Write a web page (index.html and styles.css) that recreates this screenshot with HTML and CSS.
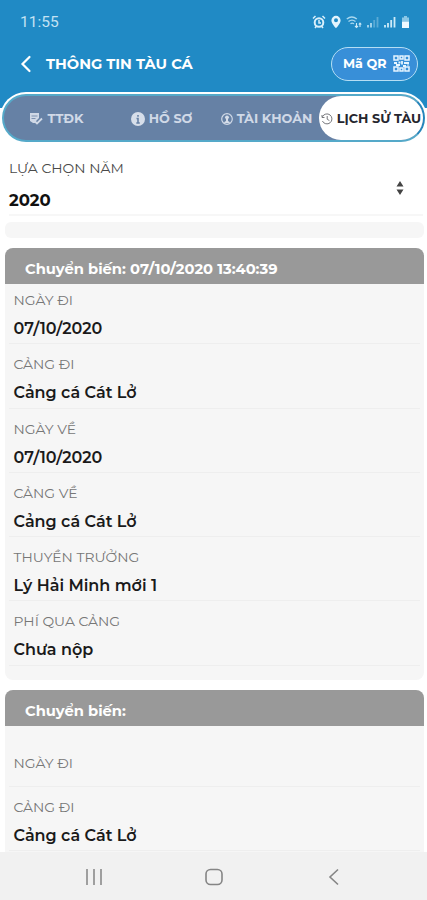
FILE: index.html
```html
<!DOCTYPE html>
<html lang="vi">
<head>
    <meta charset="UTF-8">
    <meta name="viewport" content="width=device-width, initial-scale=1.0">
    <title>Thông tin tàu cá</title>
    <link rel="stylesheet" href="styles.css">
</head>
<body>
    <div class="app">
        <div class="status-bar">
            <span class="time">11:55</span>
            <div class="status-icons">
                <svg width="14" height="14" viewBox="0 0 14 14"><circle cx="7" cy="7.5" r="4.3" fill="none" stroke="#d9effb" stroke-width="2"/><path d="M1 3.5L3.5 1M13 3.5L10.5 1M3 13l1.5-2M11 13l-1.5-2M7 5v3h2" fill="none" stroke="#d9effb" stroke-width="1.5"/></svg>
                <svg width="10" height="14" viewBox="0 0 10 14"><path d="M5 .8a4.600 4.600 0 0 0-4.600 4.600C.4 8.500 5 13.200 5 13.200S9.600 8.500 9.600 5.400A4.600 4.600 0 0 0 5 .8zm0 6.500a2 2 0 1 1 0-4 2 2 0 0 1 0 4z" fill="#e3f4fd"/></svg>
                <svg width="16" height="14" viewBox="0 0 16 14"><path d="M.8 4q5-4 10 0M2.500 6.500q3.500-2.800 7 0M4.500 8.800q1.700-1.300 3.500 0" fill="none" stroke="#a9d8ef" stroke-width="1.400"/><path d="M10.500 8v4.500M9 11l1.500 1.500L12 11M14 12V8M12.800 9.500L14 8l1.300 1.500" fill="none" stroke="#cdeaf8" stroke-width="1.100"/></svg>
                <svg width="12" height="14" viewBox="0 0 12 14"><path d="M1 12.500v-2.500M4 12.500V8" stroke="#a9d8ef" stroke-width="1.800"/><path d="M7.200 12.500V5M10.500 12.500V2" stroke="#5baad5" stroke-width="1.800"/></svg>
                <svg width="12" height="14" viewBox="0 0 12 14"><path d="M1 12.500v-2.500M4 12.500V8M7.200 12.500V5M10.500 12.500V2" stroke="#cdeaf8" stroke-width="1.800"/></svg>
                <svg width="9" height="14" viewBox="0 0 9 14"><path d="M3 1h3v1.500h2v4H1v-4h2z" fill="#8bc7e6"/><path d="M1 6.500h7V13H1z" fill="#eef9ff"/></svg>
            </div>
        </div>
        <header class="header">
            <svg width="12" height="18" viewBox="0 0 12 18"><path d="M9.500 2L2.500 9l7 7" fill="none" stroke="#fff" stroke-width="2.200" stroke-linecap="round"/></svg>
            <h1>THÔNG TIN TÀU CÁ</h1>
            <button class="qr-btn">
                <span>Mã QR</span>
                <svg width="17" height="17" viewBox="0 0 17 17"><g fill="none" stroke="#e6f5ff" stroke-width="1.500"><path d="M1 1h4v4H1zM7 1h3v3H7zM12 1h4v4h-4zM1 12h4v4H1zM12 12h4v4h-4zM7 13h3v3H7z"/><path d="M1 8h3M5.500 7.500h2M9 6v3.500M11 8h5M3 10h4M10 11h3M15 9.500v1" stroke-width="1.800"/></g></svg>
            </button>
        </header>

        <main class="content">
            <nav class="tabs">
                <a class="tab">
                    <svg width="14" height="12" viewBox="0 0 14 12"><path d="M1 0h9v5L7 8v2H4L1 8z" fill="#cfd8e6"/><path d="M2.500 3h6M2.500 5.500h4" stroke="#7d92b1"/><path d="M6 8.500l2 2 5-5" fill="none" stroke="#cfd8e6" stroke-width="1.800"/></svg>
                    <span>TTĐK</span>
                </a>
                <a class="tab">
                    <svg width="14" height="14" viewBox="0 0 14 14"><circle cx="7" cy="7" r="7" fill="#d6deea"/><path d="M7 3v1.800M5.500 6.500H7V11M5.300 11h3.500" fill="none" stroke="#6681a5" stroke-width="1.600"/></svg>
                    <span>HỒ SƠ</span>
                </a>
                <a class="tab">
                    <svg width="12" height="12" viewBox="0 0 12 12"><circle cx="6" cy="6" r="5.300" fill="none" stroke="#cfd8e6" stroke-width="1.200"/><circle cx="6" cy="4.300" r="1.900" fill="#d6deea"/><path d="M5 5h2v3l1.700 1v1H3.300V9L5 8z" fill="#d6deea"/></svg>
                    <span>TÀI KHOẢN</span>
                </a>
                <a class="tab active">
                    <svg width="12" height="12" viewBox="0 0 12 12"><path d="M1.400 3.800A5 5 0 1 1 1.400 8M1 2v2.500h2.500M6.200 3v3.200l2.200 1.400" fill="none" stroke="#77787c"/></svg>
                    <span>LỊCH SỬ TÀU</span>
                </a>
            </nav>

            <div class="year-select">
                <div>
                    <div class="select-label">LỰA CHỌN NĂM</div>
                    <div class="select-value">2020</div>
                </div>
                <svg width="8" height="14" viewBox="0 0 8 14"><path d="M4 0l3.500 5.500h-7zM4 14L.5 8.500h7z" fill="#444"/></svg>
            </div>
            <div class="empty-card"></div>

            <section class="card">
                <h2>Chuyển biến: 07/10/2020 13:40:39</h2>
                <div class="row"><div class="label">NGÀY ĐI</div><div class="value">07/10/2020</div></div>
                <div class="row"><div class="label">CẢNG ĐI</div><div class="value">Cảng cá Cát Lở</div></div>
                <div class="row"><div class="label">NGÀY VỀ</div><div class="value">07/10/2020</div></div>
                <div class="row"><div class="label">CẢNG VỀ</div><div class="value">Cảng cá Cát Lở</div></div>
                <div class="row"><div class="label">THUYỀN TRƯỞNG</div><div class="value">Lý Hải Minh mới 1</div></div>
                <div class="row"><div class="label">PHÍ QUA CẢNG</div><div class="value">Chưa nộp</div></div>
            </section>

            <section class="card">
                <h2>Chuyển biến:</h2>
                <div class="row row-empty"><div class="label">NGÀY ĐI</div></div>
                <div class="row"><div class="label">CẢNG ĐI</div><div class="value">Cảng cá Cát Lở</div></div>
            </section>
        </main>

        <footer class="nav-bar">
            <svg width="18" height="18" viewBox="0 0 18 18"><path d="M2 1v16M9 1v16M16 1v16" stroke="#8b8b8b" stroke-width="1.600"/></svg>
            <svg width="18" height="18" viewBox="0 0 18 18"><rect x="1" y="1.500" width="16" height="15" rx="4.500" fill="none" stroke="#858585" stroke-width="1.600"/></svg>
            <svg width="18" height="18" viewBox="0 0 18 18"><path d="M13 1.500L5 9l8 7.500" fill="none" stroke="#858585" stroke-width="1.600"/></svg>
        </footer>
    </div>
</body>
</html>
```
FILE: styles.css
```css
* {
    box-sizing: border-box;
}

body {
    margin: 0;
    font-family: Montserrat, Inter, "Noto Sans", sans-serif;
    background: #fff;
}

.app {
    display: flex;
    flex-direction: column;
    height: 900px;
    overflow: hidden;
    background: linear-gradient(#208ac5 108px, #fff 108px);
}

svg {
    display: block;
    flex: none;
}

.status-bar {
    display: flex;
    flex: none;
    align-items: center;
    justify-content: space-between;
    height: 44px;
    padding: 0 17px 0 20px;
}

.time {
    font-family: Roboto, sans-serif;
    font-size: 15.5px;
    color: #c3e2f3;
}

.status-icons {
    display: flex;
    align-items: center;
    gap: 5px;
}

.header {
    display: flex;
    flex: none;
    align-items: center;
    height: 48px;
    padding: 0 9px 9px 20px;
}

.header h1 {
    flex: 1;
    margin: 0 0 0 14px;
    font-size: 14.6px;
    font-weight: 700;
    color: #fff;
}

.qr-btn {
    display: flex;
    align-items: center;
    justify-content: space-between;
    width: 87px;
    height: 34px;
    padding: 0 7px 0 11px;
    border: 1.5px solid #b5def4;
    border-radius: 17px;
    background: #388fd8;
    color: #fff;
    font: 700 12.7px Montserrat, Inter, sans-serif;
}

.content {
    flex: 1;
    min-height: 0;
    padding: 2px 2px 0;
    border-radius: 26px 26px 0 0;
    background: #fff;
    overflow: hidden;
}

.tabs {
    display: flex;
    height: 48px;
    border: 2px solid #55a9c9;
    border-right-color: #2586bc;
    border-radius: 24px;
    background: #6681a5;
}

.tab {
    display: flex;
    align-items: center;
    justify-content: center;
    gap: 4px;
    width: 105px;
    padding-top: 1px;
    font-size: 12.8px;
    font-weight: 700;
    color: #d0d9e7;
    white-space: nowrap;
}

.tab.active {
    width: 104px;
    border-radius: 22px;
    background: #fff;
    color: #26262e;
}

.year-select {
    display: flex;
    align-items: center;
    justify-content: space-between;
    height: 74px;
    margin: 0 2px 0 7px;
    padding: 0 19px 0 0;
    border-bottom: 2px solid #f7f7f7;
}

.year-select svg {
    margin-top: 19px;
}

.select-label {
    margin-top: 12px;
    font-size: 13.9px;
    line-height: 20px;
    color: #4a4a4a;
}

.select-value {
    margin-top: 11px;
    font-size: 16.5px;
    font-weight: 700;
    line-height: 22px;
    color: #111;
}

.empty-card {
    height: 16px;
    margin: 6px 1px 10px 3px;
    border-radius: 6px;
    background: #f6f6f6;
}

.card {
    margin: 0 1px 10px 3px;
    padding-bottom: 14px;
    border-radius: 8px;
    background: #f6f6f6;
    overflow: hidden;
}

.card h2 {
    height: 36px;
    margin: 0 0 -4px;
    padding: 3px 20px 0;
    font-size: 14.7px;
    font-weight: 700;
    line-height: 36px;
    color: #fff;
    background: #999;
}

.row {
    height: 64.3px;
    margin: 0 4px;
    padding: 10px 4.5px 0;
    border-bottom: 1px solid #eee;
}

.row-empty {
    height: 65px;
    padding-top: 31px;
}

.label {
    font-size: 13.9px;
    line-height: 20px;
    color: #777;
}

.value {
    margin-top: 8px;
    font-size: 16px;
    font-weight: 600;
    line-height: 22px;
    color: #1a1a1a;
}

.nav-bar {
    display: flex;
    flex: none;
    align-items: center;
    justify-content: space-between;
    height: 48px;
    padding: 2px 84px 0 85px;
    background: #f1f1f1;
}
```
